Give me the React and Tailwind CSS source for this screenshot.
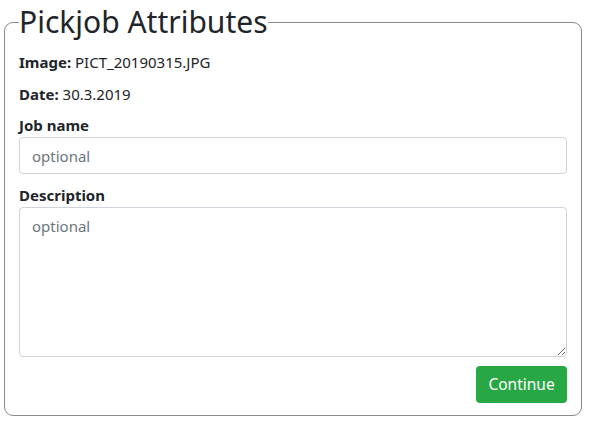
import React from 'react';

const App = () => {
    return (
        <div className="w-[591px] h-[425px] bg-white pl-[4px] font-['Noto_Sans',sans-serif] text-[#212529]">
            <fieldset className="w-[578px] border border-[#8a8a8a] rounded-[9px] px-[14px] pb-[12px]">
                <legend className="text-[30px] leading-[44px] font-normal">Pickjob Attributes</legend>

                <p className="mt-[8px] text-[15px] leading-[21px]">
                    <span className="font-bold">Image:</span> PICT_20190315.JPG
                </p>
                <p className="mt-[11px] text-[15px] leading-[21px]">
                    <span className="font-bold">Date:</span> 30.3.2019
                </p>

                <label className="block mt-[10px] text-[15px] leading-[21px] font-bold">Job name</label>
                <input
                    type="text"
                    placeholder="optional"
                    className="block w-full h-[37px] mt-[1px] px-[12px] text-[15px] border border-[#ced4da] rounded-[4px] placeholder:text-[#6c757d] outline-none"
                />

                <label className="block mt-[11px] text-[15px] leading-[21px] font-bold">Description</label>
                <textarea
                    placeholder="optional"
                    className="block w-full h-[150px] mt-[1px] px-[12px] py-[7px] text-[15px] border border-[#ced4da] rounded-[4px] placeholder:text-[#6c757d] outline-none"
                />

                <div className="flex justify-end mt-[9px]">
                    <button className="w-[91px] h-[37px] bg-[#28a745] text-white text-[15.5px] rounded-[4px]">
                        Continue
                    </button>
                </div>
            </fieldset>
        </div>
    );
};

export default App;
